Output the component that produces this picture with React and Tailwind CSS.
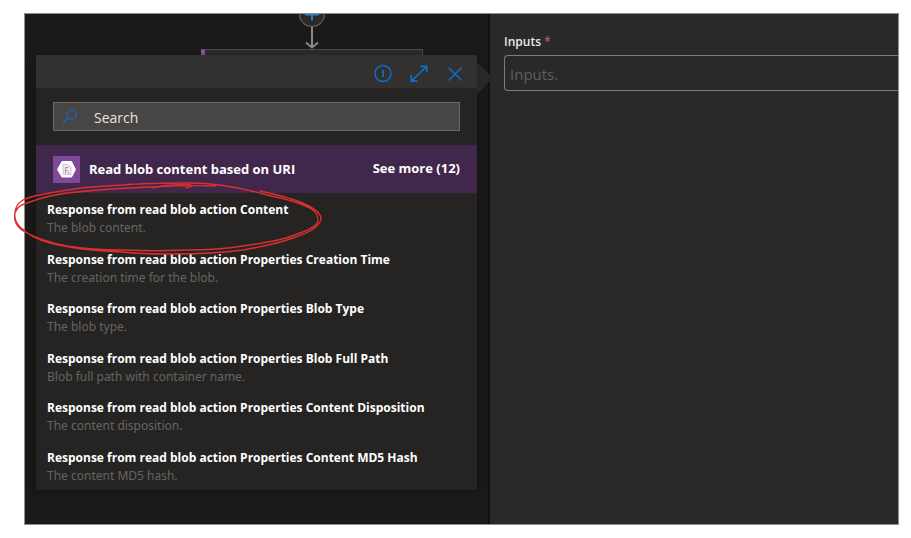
import React, { useState } from 'react';

const outputs = [
  { title: 'Response from read blob action Content', description: 'The blob content.' },
  { title: 'Response from read blob action Properties Creation Time', description: 'The creation time for the blob.' },
  { title: 'Response from read blob action Properties Blob Type', description: 'The blob type.' },
  { title: 'Response from read blob action Properties Blob Full Path', description: 'Blob full path with container name.' },
  { title: 'Response from read blob action Properties Content Disposition', description: 'The content disposition.' },
  { title: 'Response from read blob action Properties Content MD5 Hash', description: 'The content MD5 hash.' },
];

function InfoIcon() {
  return (
    <svg className="w-5 h-5" viewBox="0 0 20 20" fill="none" stroke="currentColor" strokeWidth="1.4">
      <circle cx="10" cy="9.5" r="8" />
      <path d="M10 6v7" strokeWidth="1.8" />
    </svg>
  );
}

function ExpandIcon() {
  return (
    <svg className="w-5 h-5" viewBox="0 0 20 20" fill="none" stroke="currentColor" strokeWidth="1.7">
      <path d="M2.5 17L17.5 2.5M11.5 2.3h6.2V8.5M2.3 11v6.2h6.2" />
    </svg>
  );
}

function CloseIcon() {
  return (
    <svg className="w-5 h-5" viewBox="0 0 20 20" fill="none" stroke="currentColor" strokeWidth="1.4">
      <path d="M3.5 3.5l13 13M16.5 3.5l-13 13" />
    </svg>
  );
}

function SearchIcon() {
  return (
    <svg className="w-4 h-4 shrink-0 text-[#1c66b4]" viewBox="0 0 16 16" fill="none" stroke="currentColor" strokeWidth="1.4">
      <circle cx="9.5" cy="5.5" r="4.6" />
      <path d="M6.2 8.8L1 14.2" />
    </svg>
  );
}

function BlobIcon() {
  return (
    <svg className="w-[27px] h-[27px] shrink-0" viewBox="0 0 27 27">
      <rect width="27" height="27" fill="#804998" />
      <path d="M9 5.5h9.5L22.5 13.5l-4 7.5H9l-4.5-7.5z" fill="#fff" stroke="#fff" strokeLinejoin="round" />
      <path d="M10 8.5h5l3 3V18.500h-8z" fill="#efe6f2" stroke="#cdb6d6" strokeWidth="0.8" />
      <path d="M12.5 11v6.5M12.5 11.5h3M12.5 14.5h2M15.5 16v1.5" stroke="#a98bb6" strokeWidth="0.9" />
    </svg>
  );
}

// Part of the workflow that shows from behind the picker
function WorkflowCanvas() {
  return (
    <div className="absolute inset-0 overflow-hidden" aria-hidden="true">
      <svg className="absolute left-[272px] top-0 w-[30px] h-9" viewBox="0 0 30 36" fill="none">
        <circle cx="15" cy="0" r="12.5" fill="#2b2a29" stroke="#5e5d5b" strokeWidth="1.3" />
        <path d="M15 0v6.5M8 0.5h14" stroke="#2f7fc0" strokeWidth="1.8" />
        <path d="M15 13v20" stroke="#8a8886" strokeWidth="2" />
        <path d="M9 28.5l6 5 6-5" stroke="#8a8886" strokeWidth="2" />
      </svg>
      <div className="absolute left-44 top-[35px] w-[222px] h-10 border border-[#4b4a48] border-l-4 border-l-[#8a4fa5] bg-[#2d2c2a]" />
    </div>
  );
}

function Annotation() {
  return (
    <svg
      className="absolute left-[-11px] top-[168px] w-[308px] h-[76px] pointer-events-none"
      viewBox="0 0 308 76"
      fill="none"
      stroke="#d92f30"
      strokeWidth="1.4"
      strokeLinecap="round"
      aria-hidden="true"
    >
      <path d="M201 4C180 3 158 4 136 5C108 6 80 8 53 11C38 13 26 16 16 20C9 22 5 24 3 27C0 31 0 34 1 38C2 43 6 47 11 50C24 57 38 61 53 64C72 67 90 68 109 68C130 69 152 69 173 68C192 68 211 67 229 64C250 61 270 58 286 51C297 47 304 43 304 38C304 33 301 29 296 26C284 20 268 16 253 13C228 6 202 1 176 1C154 1 131 1 109 3C84 4 60 6 36 11C26 13 16 14 9 18C4 21 1 25 1 31C0 37 2 41 6 45C14 53 24 58 36 61C60 67 84 69 109 70C126 72 142 72 159 72C183 72 206 71 229 68C246 65 263 62 279 56C294 51 307 45 307 36C306 29 296 24 286 20C274 15 260 12 246 9" />
      <path d="M138 6C150 3 164 2 176 3C180 3 176 5 172 6" />
    </svg>
  );
}

function ContentPicker() {
  const [query, setQuery] = useState('');
  const visible = outputs.filter(o => o.title.toLowerCase().includes(query.toLowerCase()));

  return (
    <section className="relative mt-[41px] mx-[11px] bg-[#252423] shadow-[0_2px_8px_rgba(0,0,0,0.4)]">
      <svg className="absolute left-full top-[7px] w-4 h-8" viewBox="0 0 16 32" aria-hidden="true">
        <path d="M0 0l16 16L0 32z" fill="#292827" />
      </svg>

      <header className="flex items-center justify-end gap-4 h-[33px] pt-1 pr-3 bg-[#323130] text-[#0f6fd0]">
        <button type="button" aria-label="Information"><InfoIcon /></button>
        <button type="button" aria-label="Expand"><ExpandIcon /></button>
        <button type="button" aria-label="Close"><CloseIcon /></button>
      </header>

      <label className="flex items-center gap-4 h-[29px] mt-[14px] mx-[17px] px-2 border border-[#6b6a68] bg-[#484644]">
        <SearchIcon />
        <input
          type="text"
          aria-label="Search"
          placeholder="Search"
          value={query}
          onChange={(e) => setQuery(e.target.value)}
          className="flex-1 min-w-0 pt-0.5 bg-transparent text-sm text-white placeholder-[#e6e4e2] focus:outline-none"
        />
      </label>

      <div className="flex items-center h-12 mt-[14px] px-[17px] bg-[#42274c] text-white">
        <BlobIcon />
        <h2 className="flex-1 pl-[9px] pt-0.5 text-[13px] font-bold">Read blob content based on URI</h2>
        <button type="button" className="text-[13px] font-bold">See more (12)</button>
      </div>

      <ul className="grid grid-rows-6 min-h-[297px]">
        {visible.map(output => (
          <li key={output.title}>
            <button type="button" className="block w-full pt-2 px-[11px] text-left">
              <span className="block text-xs leading-[18px] font-bold text-white">{output.title}</span>
              <span className="block font-['Noto_Sans',sans-serif] text-xs leading-[18px] text-[#656462]">{output.description}</span>
            </button>
          </li>
        ))}
      </ul>
    </section>
  );
}

function ParametersPanel() {
  return (
    <div className="overflow-hidden pt-5 pl-[14px] border-l-2 border-[#101010] bg-[#292929]">
      <label htmlFor="inputs" className="block text-xs leading-4 font-semibold text-[#e8e8e8]">
        Inputs <span className="text-[#c95560]">*</span>
      </label>
      <input
        id="inputs"
        type="text"
        placeholder="Inputs."
        className="block w-full h-9 mt-[5px] px-[5px] pt-0.5 rounded-l-sm border border-r-0 border-[#7c7c7c] bg-transparent text-[15px] text-white placeholder-[#5f5f5f] focus:outline-none"
      />
    </div>
  );
}

export default function App() {
  return (
    <div className="flex min-h-screen pl-6 pr-3 py-[13px] bg-white font-['Open_Sans','Noto_Sans',sans-serif]">
      <main className="relative flex-1 grid grid-cols-[463fr_410fr] border border-[#8f8f8f]">
        <div className="relative bg-[#1b1a19]">
          <WorkflowCanvas />
          <ContentPicker />
        </div>
        <ParametersPanel />
        <Annotation />
      </main>
    </div>
  );
}
